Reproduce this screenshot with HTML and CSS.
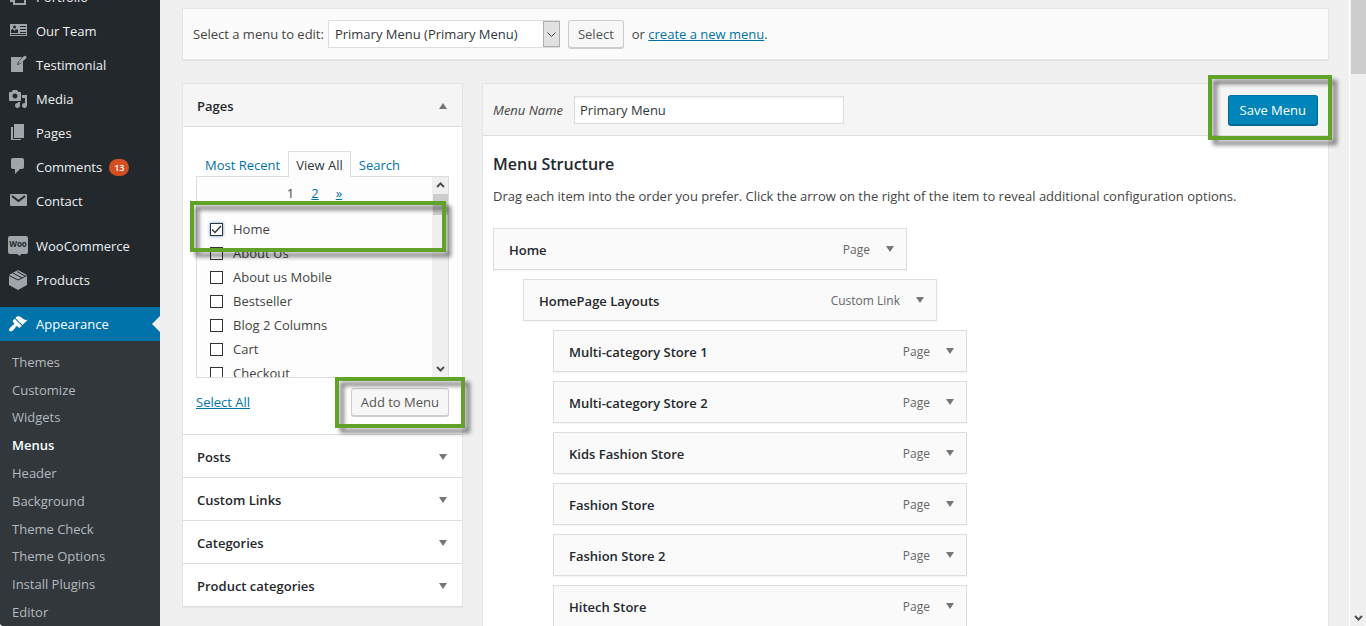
FILE: index.html
```html
<!DOCTYPE html>
<html lang="en">
<head>
<meta charset="utf-8">
<title>Menus</title>
<link rel="stylesheet" href="styles.css">
</head>
<body>
<div class="app">
  <nav class="sidebar" aria-label="Admin menu">
    <ul class="nav">
      <li><a class="nav-link" href="#"><svg class="icon" viewBox="0 0 20 20"><path fill-rule="evenodd" d="M2 3h12v3h4v12H5v-3H2zM4 5v8h1V6h7V5zM7 12v4h9v-4z"/></svg>Portfolio</a></li>
      <li><a class="nav-link" href="#"><svg class="icon" viewBox="0 0 20 20"><path fill-rule="evenodd" d="M2 3h17v12H2zM12 5h6v1h-6zM12 8h6v1h-6zM12 11h6v1h-6zM3 13h15v1H3z"/><circle class="icon-dark" cx="6.500" cy="6" r="1.500"/><path class="icon-dark" d="M3 12V9l2-1 1.500 2L8 8l2 1v3z"/></svg>Our Team</a></li>
      <li><a class="nav-link" href="#"><svg class="icon" viewBox="0 0 20 20"><path d="M3 2h11l-4 5-1 3 3-1 3-3v11H3z"/><path d="M10 9l1-3 5-5q1-.7 2 .2t.200 2L13 8z"/></svg>Testimonial</a></li>
      <li><a class="nav-link" href="#"><svg class="icon" viewBox="0 0 20 20"><path d="M13 11V4c0-.55-.45-1-1-1h-1.670L9 1H5L3.670 3H2c-.55 0-1 .45-1 1v7c0 .55.45 1 1 1h10c.55 0 1-.45 1-1zM7 4.500c1.380 0 2.500 1.120 2.500 2.500S8.380 9.500 7 9.500 4.500 8.380 4.500 7 5.620 4.500 7 4.500zM14 6h5v10.500c0 1.380-1.120 2.500-2.500 2.500S14 17.880 14 16.500s1.120-2.500 2.500-2.500c.17 0 .34.02.5.05V9h-3V6zm-4 8.050V13h2v3.500c0 1.380-1.120 2.500-2.500 2.500S7 17.880 7 16.500 8.120 14 9.500 14c.17 0 .34.02.5.05z"/></svg>Media</a></li>
      <li><a class="nav-link" href="#"><svg class="icon" viewBox="0 0 20 20"><path d="M6 15V1h10v14H6zm-1 1h8v1H3V4h2v12z"/></svg>Pages</a></li>
      <li><a class="nav-link" href="#"><svg class="icon" viewBox="0 0 20 20"><path d="M5 1h9q2 0 2 2v7q0 2-2 2h-2l-5 5v-5H5q-2 0-2-2V3q0-2 2-2z"/></svg>Comments <span class="badge">13</span></a></li>
      <li><a class="nav-link" href="#"><svg class="icon" viewBox="0 0 20 20"><rect x="2" y="3" width="17" height="12" rx="1"/><path class="icon-cut" d="M4 5l6.500 5L17 5"/></svg>Contact</a></li>
      <li class="nav-group"><a class="nav-link" href="#"><svg class="icon" viewBox="0 0 20 20"><path d="M2 0h16q2 0 2 2v14q0 2-2 2h-5l-1 2-3-2H2q-2 0-2-2V2q0-2 2-2z"/><text class="woo" x="10" y="11" text-anchor="middle">Woo</text></svg>WooCommerce</a></li>
      <li><a class="nav-link" href="#"><svg class="icon" viewBox="0 0 20 20"><path d="M10 0l9 5v10l-9 5-9-5V5z"/><path class="icon-seam" d="M1 5.500l9 4.500 9-4.500M5 3l9 5M9 1.500l8 4.500"/></svg>Products</a></li>
      <li class="nav-group"><a class="nav-link nav-link-current" href="#"><svg class="icon" viewBox="0 0 20 20"><path d="M14.480 11.060L7.410 3.990l1.500-1.500c.5-.56 2.300-.47 3.510.32 1.210.8 1.430 1.280 2.910 2.100 1.180.64 2.450 1.260 4.450.85zm-.71.71L6.700 4.700 4.930 6.470c-.39.39-.39 1.020 0 1.410l1.060 1.060c.39.39.39 1.030 0 1.420-.6.6-1.430 1.110-2.210 1.690-.35.26-.7.53-1.010.84C1.430 14.230.4 16.080 1.400 17.070c.99 1 2.840-.03 4.180-1.360.31-.31.58-.66.85-1.020.57-.78 1.080-1.610 1.690-2.210.39-.39 1.020-.39 1.410 0l1.060 1.060c.39.39 1.020.39 1.410 0z"/></svg>Appearance</a></li>
    </ul>
    <ul class="subnav">
      <li><a href="#">Themes</a></li>
      <li><a href="#">Customize</a></li>
      <li><a href="#">Widgets</a></li>
      <li><a class="subnav-current" href="#">Menus</a></li>
      <li><a href="#">Header</a></li>
      <li><a href="#">Background</a></li>
      <li><a href="#">Theme Check</a></li>
      <li><a href="#">Theme Options</a></li>
      <li><a href="#">Install Plugins</a></li>
      <li><a href="#">Editor</a></li>
    </ul>
  </nav>

  <main class="content">
    <form class="manage">
      <div class="manage-field">
        <label for="menu-select">Select a menu to edit:</label>
        <span class="select-wrap">
          <select id="menu-select" class="select"><option>Primary Menu (Primary Menu)</option></select>
          <span class="select-arrow"><svg class="chevron" viewBox="0 0 9 9"><path d="M.500 2.500l4 4 4-4"/></svg></span>
        </span>
      </div>
      <button class="button" type="button">Select</button>
      <span>or <a class="link" href="#">create a new menu</a>.</span>
    </form>

    <div class="columns">
      <section class="accordion">
        <h3 class="acc-title acc-title-open"><button type="button">Pages<svg class="tri" viewBox="0 0 8 6"><path d="M0 6h8L4 0z"/></svg></button></h3>
        <div class="acc-body">
          <div class="tabs">
            <a class="tab" href="#">Most Recent</a>
            <a class="tab tab-active" href="#">View All</a>
            <a class="tab" href="#">Search</a>
          </div>
          <div class="panel-wrap">
            <div class="panel">
              <div class="panel-main">
                <div class="pager"><span>1</span><a class="link" href="#">2</a><a class="link" href="#">»</a></div>
                <ul class="checks">
                  <li><label><input class="check check-focus" type="checkbox" checked>Home</label></li>
                  <li><label><input class="check" type="checkbox">About Us</label></li>
                  <li><label><input class="check" type="checkbox">About us Mobile</label></li>
                  <li><label><input class="check" type="checkbox">Bestseller</label></li>
                  <li><label><input class="check" type="checkbox">Blog 2 Columns</label></li>
                  <li><label><input class="check" type="checkbox">Cart</label></li>
                  <li><label><input class="check" type="checkbox">Checkout</label></li>
                </ul>
              </div>
              <div class="bar bar-small">
                <svg class="bar-arrow" viewBox="0 0 9 9"><path d="M1 6l3.500-3.500L8 6"/></svg>
                <span class="thumb thumb-small"></span>
                <svg class="bar-arrow bar-down" viewBox="0 0 9 9"><path d="M1 3l3.500 3.500L8 3"/></svg>
              </div>
            </div>
            <span class="mark mark-home"></span>
          </div>
          <div class="acc-actions">
            <a class="link" href="#">Select All</a>
            <span class="marked"><button class="button" type="button">Add to Menu</button><span class="mark mark-add"></span></span>
          </div>
        </div>
        <h3 class="acc-title"><button type="button">Posts<svg class="tri" viewBox="0 0 8 6"><path d="M0 0h8L4 6z"/></svg></button></h3>
        <h3 class="acc-title"><button type="button">Custom Links<svg class="tri" viewBox="0 0 8 6"><path d="M0 0h8L4 6z"/></svg></button></h3>
        <h3 class="acc-title"><button type="button">Categories<svg class="tri" viewBox="0 0 8 6"><path d="M0 0h8L4 6z"/></svg></button></h3>
        <h3 class="acc-title"><button type="button">Product categories<svg class="tri" viewBox="0 0 8 6"><path d="M0 0h8L4 6z"/></svg></button></h3>
      </section>

      <section class="editor">
        <header class="editor-head">
          <label class="name-label" for="menu-name">Menu Name</label>
          <input id="menu-name" class="text" type="text" value="Primary Menu">
          <span class="marked save"><button class="button button-primary" type="button">Save Menu</button><span class="mark mark-save"></span></span>
        </header>
        <div class="editor-body">
          <h2 class="title">Menu Structure</h2>
          <p class="hint">Drag each item into the order you prefer. Click the arrow on the right of the item to reveal additional configuration options.</p>
          <ul class="items">
            <li class="item"><span class="item-name">Home</span><span>Page</span><svg class="tri" viewBox="0 0 8 6"><path d="M0 0h8L4 6z"/></svg></li>
            <li class="item depth-1"><span class="item-name">HomePage Layouts</span><span>Custom Link</span><svg class="tri" viewBox="0 0 8 6"><path d="M0 0h8L4 6z"/></svg></li>
            <li class="item depth-2"><span class="item-name">Multi-category Store 1</span><span>Page</span><svg class="tri" viewBox="0 0 8 6"><path d="M0 0h8L4 6z"/></svg></li>
            <li class="item depth-2"><span class="item-name">Multi-category Store 2</span><span>Page</span><svg class="tri" viewBox="0 0 8 6"><path d="M0 0h8L4 6z"/></svg></li>
            <li class="item depth-2"><span class="item-name">Kids Fashion Store</span><span>Page</span><svg class="tri" viewBox="0 0 8 6"><path d="M0 0h8L4 6z"/></svg></li>
            <li class="item depth-2"><span class="item-name">Fashion Store</span><span>Page</span><svg class="tri" viewBox="0 0 8 6"><path d="M0 0h8L4 6z"/></svg></li>
            <li class="item depth-2"><span class="item-name">Fashion Store 2</span><span>Page</span><svg class="tri" viewBox="0 0 8 6"><path d="M0 0h8L4 6z"/></svg></li>
            <li class="item depth-2"><span class="item-name">Hitech Store</span><span>Page</span><svg class="tri" viewBox="0 0 8 6"><path d="M0 0h8L4 6z"/></svg></li>
          </ul>
        </div>
      </section>
    </div>
  </main>

  <div class="bar bar-page">
    <span class="thumb thumb-page"></span>
    <svg class="bar-arrow bar-down" viewBox="0 0 9 9"><path d="M1 3l3.500 3.500L8 3"/></svg>
  </div>
</div>
</body>
</html>
```
FILE: styles.css
```css
* { box-sizing: border-box; }
html { background: #fff; }
body {
  margin: 0;
  font: 13px/20px "Open Sans", "Noto Sans", sans-serif;
  color: #444;
}
ul { list-style: none; margin: 0; padding: 0; }
h2, h3, p { margin: 0; }
a { text-decoration: none; }
button, input, select { font: inherit; color: inherit; margin: 0; }

.app {
  display: flex;
  height: 100vh;
  overflow: hidden;
  background: #f0f0f0;
  border-radius: 0 0 4px 4px;
}

/* Sidebar */
.sidebar {
  flex: 0 0 160px;
  display: flex;
  flex-direction: column;
  background: #23282d;
}
.nav { margin-top: -20px; }
.nav-group { padding-top: 11px; }
.nav-group:last-child { padding-top: 10px; }
.nav-link {
  position: relative;
  display: flex;
  align-items: center;
  gap: 8px;
  height: 34px;
  padding-left: 8px;
  color: #eee;
}
.icon { width: 20px; height: 20px; fill: #a0a5aa; }
.icon-dark { fill: #23282d; }
.icon-cut { fill: none; stroke: #23282d; stroke-width: 2; }
.icon-seam { fill: none; stroke: #23282d; stroke-width: 1; }
.woo { font: bold 8px "Open Sans", sans-serif; fill: #23282d; }
.nav-link-current { background: #0073aa; color: #fff; }
.nav-link-current .icon { fill: #fff; }
.nav-link-current::after {
  content: "";
  position: absolute;
  right: 0;
  top: 9px;
  border: 8px solid transparent;
  border-left-width: 0;
  border-right-color: #f0f0f0;
}
.badge {
  padding: 0 5px;
  margin-left: -1px;
  border-radius: 9px;
  background: #d54e21;
  color: #fff;
  font-size: 9px;
  font-weight: 600;
  line-height: 17px;
}
.subnav {
  flex: 1;
  display: flex;
  flex-direction: column;
  padding-top: 7px;
  background: #32373c;
}
.subnav li { flex: 1; display: flex; align-items: center; padding-left: 12px; }
.subnav a { color: #b4b9be; }
.subnav .subnav-current { color: #fff; font-weight: 600; }

/* Content */
.content { flex: 1; min-width: 0; padding: 8px 20px 0 22px; }
.link { color: #0073aa; text-decoration: underline; }
.manage {
  display: flex;
  align-items: center;
  gap: 8px;
  height: 52px;
  padding: 0 10px;
  background: #fbfbfb;
  border: 1px solid #e5e5e5;
  box-shadow: 0 1px 1px rgba(0, 0, 0, .04);
}
.manage-field { display: flex; align-items: center; gap: 4px; }
.select-wrap { position: relative; flex: 0 0 232px; }
.select {
  appearance: none;
  display: block;
  width: 100%;
  height: 28px;
  padding: 0 24px 0 6px;
  background: #fff;
  border: 1px solid #ddd;
  border-radius: 0;
  color: #32373c;
}
.select-arrow {
  position: absolute;
  inset: 1px 0 1px auto;
  width: 17px;
  display: grid;
  place-items: center;
  background: #e1e1e1;
  border: 1px solid #adadad;
  pointer-events: none;
}
.chevron { width: 9px; height: 9px; fill: none; stroke: #444; }
.button {
  height: 28px;
  padding: 0 9px;
  background: #f7f7f7;
  border: 1px solid #ccc;
  border-radius: 3px;
  box-shadow: 0 1px 0 #ccc;
  color: #555;
  white-space: nowrap;
}
.button-primary {
  height: 30px;
  padding: 0 11px;
  background: #0085ba;
  border-color: #0073aa #006799 #006799;
  box-shadow: 0 1px 0 #006799;
  color: #fff;
}

.columns { display: flex; align-items: flex-start; gap: 19px; padding-top: 23px; }
.accordion {
  flex: 0 0 281px;
  background: #fff;
  border: 1px solid #e5e5e5;
  border-bottom: 0;
  box-shadow: 0 1px 1px rgba(0, 0, 0, .04);
}
.acc-title { border-bottom: 1px solid #ddd; font-size: 13px; }
.acc-title-open { background: #f5f5f5; }
.acc-title button {
  display: flex;
  align-items: center;
  justify-content: space-between;
  width: 100%;
  height: 42px;
  padding: 2px 15px 0 14px;
  background: none;
  border: 0;
  color: #23282d;
  font-weight: 600;
}
.tri { width: 8px; height: 6px; fill: #72777c; }
.acc-body { padding: 24px 13px 18px; border-bottom: 1px solid #ddd; }
.tabs { display: flex; padding-left: 1px; }
.tab { padding: 3px 7px 1px; border: 1px solid transparent; border-bottom: 0; color: #0073aa; }
.tab-active {
  position: relative;
  z-index: 1;
  margin-bottom: -1px;
  background: #fdfdfd;
  border-color: #ddd;
  color: #32373c;
}
.panel-wrap { position: relative; }
.panel {
  display: flex;
  height: 202px;
  overflow: hidden;
  background: #fdfdfd;
  border: 1px solid #ddd;
}
.panel-main { flex: 1; padding: 6px 13px; }
.pager { display: flex; justify-content: center; gap: 17px; }
.checks { padding-top: 14px; }
.checks li { height: 24px; }
.checks label { display: flex; align-items: center; gap: 10px; height: 24px; }
.check {
  appearance: none;
  width: 13px;
  height: 13px;
  border: 1px solid #333;
  background: #fff;
}
.check:checked {
  background: #fff url('data:image/svg+xml,<svg xmlns="http://www.w3.org/2000/svg" viewBox="0 0 11 11"><path d="M1 5.500l3 3 6-6.500" fill="none" stroke="%23333" stroke-width="1.300"/></svg>');
}
.check-focus { box-shadow: 0 0 3px #5b9dd9; }
.acc-actions { display: flex; align-items: center; justify-content: space-between; padding-top: 10px; }
.marked { position: relative; display: block; }
.marked .button { display: block; }

/* Callout frames lying over the controls */
.mark {
  position: absolute;
  border: 4px solid #61a229;
  filter: drop-shadow(5px 5px 2px rgba(0, 0, 0, .5));
  pointer-events: none;
}
.mark-home { inset: 25px 3px auto -6px; height: 51px; }
.mark-add { inset: -11px -16px -12px -16px; }
.mark-save { inset: -20px -14px -15px -20px; }

/* Menu editor */
.editor {
  flex: 1;
  min-width: 0;
  min-height: 600px;
  background: #fff;
  border: 1px solid #e5e5e5;
}
.editor-head {
  display: flex;
  align-items: center;
  gap: 11px;
  height: 52px;
  padding: 0 10px;
  background: #f5f5f5;
  border-bottom: 1px solid #ddd;
}
.name-label { font-style: italic; }
.text {
  width: 270px;
  height: 28px;
  padding: 2px 5px;
  background: #fff;
  border: 1px solid #ddd;
  box-shadow: inset 0 1px 2px rgba(0, 0, 0, .07);
  color: #32373c;
}
.save { margin-left: auto; }
.editor-body { padding: 18px 10px; }
.title { font-size: 16px; line-height: 20px; font-weight: 600; color: #23282d; }
.hint { padding-top: 12px; }
.items { display: grid; gap: 9px; padding-top: 22px; }
.item {
  display: flex;
  align-items: center;
  width: 414px;
  height: 42px;
  padding: 2px 12px 0 15px;
  background: #fafafa;
  border: 1px solid #ddd;
  box-shadow: 0 1px 1px rgba(0, 0, 0, .04);
  font-size: 12px;
  color: #666;
}
.item-name { flex: 1; font-size: 13px; font-weight: 600; color: #23282d; }
.item .tri { margin: 0 0 3px 16px; }
.depth-1 { margin-left: 30px; }
.depth-2 { margin-left: 60px; }

/* Scrollbars */
.bar { display: flex; flex-direction: column; align-items: center; background: #f0f0f0; }
.bar-small { flex: 0 0 16px; padding: 4px 0; }
.bar-page { flex: 0 0 17px; padding-bottom: 4px; border-left: 1px solid #fff; }
.bar-arrow { flex: none; width: 9px; height: 9px; fill: none; stroke: #505050; stroke-width: 2; }
.bar-down { margin-top: auto; }
.thumb { background: #cdcdcd; }
.thumb-small { width: 15px; height: 21px; margin-top: 4px; }
.thumb-page { width: 15px; height: 74px; }
```
